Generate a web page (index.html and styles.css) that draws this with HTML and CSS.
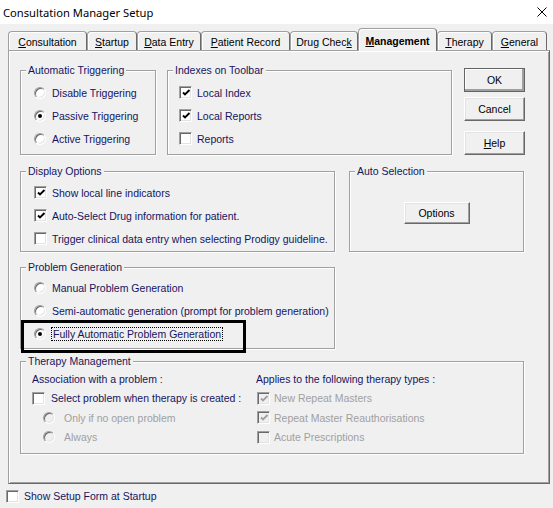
FILE: index.html
```html
<!DOCTYPE html>
<html>
<head>
    <meta charset="utf-8">
    <title>Consultation Manager Setup</title>
    <link rel="stylesheet" href="styles.css">
</head>
<body>
    <div class="titlebar">
        <span class="title">Consultation Manager Setup</span>
        <svg class="close" width="10" height="10" viewBox="0 0 10 10"><path d="M0.5 0.5L9.5 9.5M9.5 0.5L0.5 9.5" stroke="#000" stroke-width="1"/></svg>
    </div>

    <div class="tabs">
        <div class="tab w-cons"><u>C</u>onsultation</div>
        <div class="tab w-start"><u>S</u>tartup</div>
        <div class="tab w-data"><u>D</u>ata Entry</div>
        <div class="tab w-pat"><u>P</u>atient Record</div>
        <div class="tab w-drug">Drug Chec<u>k</u></div>
        <div class="tab w-man active"><u>M</u>anagement</div>
        <div class="tab w-ther"><u>T</u>herapy</div>
        <div class="tab w-gen"><u>G</u>eneral</div>
    </div>

    <div class="panel">
        <div class="row row-top">
            <fieldset class="group g-trig">
                <legend>Automatic Triggering</legend>
                <div class="opt"><span class="radio"></span>Disable Triggering</div>
                <div class="opt"><span class="radio on"></span>Passive Triggering</div>
                <div class="opt"><span class="radio"></span>Active Triggering</div>
            </fieldset>
            <fieldset class="group g-index">
                <legend>Indexes on Toolbar</legend>
                <div class="opt"><span class="check"><svg viewBox="0 0 9 9"><path d="M1 3.5L3 5.5L7.5 1" /></svg></span>Local Index</div>
                <div class="opt"><span class="check"><svg viewBox="0 0 9 9"><path d="M1 3.5L3 5.5L7.5 1" /></svg></span>Local Reports</div>
                <div class="opt"><span class="check"></span>Reports</div>
            </fieldset>
            <div class="buttons">
                <div class="btn default">OK</div>
                <div class="btn b-cancel">Cancel</div>
                <div class="btn b-help"><u>H</u>elp</div>
            </div>
        </div>

        <div class="row row-mid">
            <fieldset class="group g-display">
                <legend>Display Options</legend>
                <div class="opt"><span class="check"><svg viewBox="0 0 9 9"><path d="M1 3.5L3 5.5L7.5 1" /></svg></span>Show local line indicators</div>
                <div class="opt"><span class="check"><svg viewBox="0 0 9 9"><path d="M1 3.5L3 5.5L7.5 1" /></svg></span>Auto-Select Drug information for patient.</div>
                <div class="opt"><span class="check"></span>Trigger clinical data entry when selecting Prodigy guideline.</div>
            </fieldset>
            <fieldset class="group g-autosel">
                <legend>Auto Selection</legend>
                <div class="btn b-options">Options</div>
            </fieldset>
        </div>

        <fieldset class="group g-problem">
            <legend>Problem Generation</legend>
            <div class="opt"><span class="radio"></span>Manual Problem Generation</div>
            <div class="opt"><span class="radio"></span>Semi-automatic generation (prompt for problem generation)</div>
            <div class="opt marked"><span class="radio on"></span><span class="focus">Fully Automatic Problem Generation</span><span class="mark"></span></div>
        </fieldset>

        <fieldset class="group g-therapy">
            <legend>Therapy Management</legend>
            <div class="cols">
                <div class="col col-left">
                    <div class="line">Association with a problem :</div>
                    <div class="line"><span class="check"></span>Select problem when therapy is created :</div>
                    <div class="line sub off"><span class="radio"></span>Only if no open problem</div>
                    <div class="line sub off"><span class="radio"></span>Always</div>
                </div>
                <div class="col col-right">
                    <div class="line">Applies to the following therapy types :</div>
                    <div class="line off"><span class="check"><svg viewBox="0 0 9 9"><path d="M1 3.5L3 5.5L7.5 1" /></svg></span>New Repeat Masters</div>
                    <div class="line off"><span class="check"><svg viewBox="0 0 9 9"><path d="M1 3.5L3 5.5L7.5 1" /></svg></span>Repeat Master Reauthorisations</div>
                    <div class="line off"><span class="check"></span>Acute Prescriptions</div>
                </div>
            </div>
        </fieldset>
    </div>

    <div class="startup"><span class="check"></span>Show Setup Form at Startup</div>
</body>
</html>
```

FILE: styles.css
```css
* {box-sizing: border-box;}
body {
    margin: 0;
    width: 553px;
    height: 508px;
    overflow: hidden;
    background: #f0f0f0;
    color: #15155e;
    font: 10.5px "Liberation Sans", Arial, sans-serif;}

/* window title */
.titlebar {
    height: 24px;
    background: #fff;
    display: flex;
    align-items: center;
    justify-content: space-between;
    padding: 0 6px 0 3px;}
.title {font: 11.2px "Noto Sans", sans-serif; color: #000;}
.close {margin-top: -1px;}

/* tab strip */
.tabs {
    display: flex;
    align-items: flex-end;
    height: 26px;
    padding-left: 8px;
    position: relative;
    z-index: 1;}
.tab {
    height: 19px;
    border: 1px solid #a0a0a0;
    border-right-color: #696969;
    border-bottom: none;
    border-radius: 4px 4px 0 0;
    box-shadow: inset 1px 1px #fff;
    color: #000;
    display: flex;
    align-items: center;
    justify-content: center;
    padding-top: 1px;}
.tab.active {height: 23px; margin-bottom: -1px; background: #f0f0f0; font-weight: bold;}
.w-cons {width: 79px;}
.w-start {width: 50px;}
.w-data {width: 64px;}
.w-pat {width: 89px;}
.w-drug {width: 68px;}
.w-man {width: 79px;}
.w-ther {width: 55px;}
.w-gen {width: 55px;}

/* page of the tab */
.panel {
    margin-left: 8px;
    width: 542px;
    height: 434px;
    border: 1px solid;
    border-color: #a0a0a0 #696969 #696969 #a0a0a0;
    box-shadow: inset 1px 1px #fff, inset -1px -1px #a0a0a0;
    padding: 13px 0 0 11px;}
.row {display: flex; align-items: flex-start;}

.group {
    margin: 0;
    padding: 0;
    min-width: 0;
    border: 1px solid #a0a0a0;
    box-shadow: 1px 1px #fff, inset 1px 1px #fff;}
.group legend {
    margin-left: 5px;
    padding: 0 2px;
    height: 13px;
    line-height: 13px;
    background: #f0f0f0;}

.opt {display: flex; align-items: center; height: 23px; white-space: nowrap;}

.g-trig {width: 136px; height: 91px; padding-top: 4px;}
.g-trig .opt {padding-left: 13px; gap: 6px;}
.g-index {width: 285px; height: 91px; margin-left: 11px; padding-top: 4px;}
.g-index .opt {padding-left: 11px; gap: 5px;}

.buttons {display: flex; flex-direction: column; margin: 4px 0 0 12px;}
.btn {
    width: 61px;
    height: 24px;
    display: flex;
    align-items: center;
    justify-content: center;
    color: #000;
    border: 1px solid;
    border-color: #fff #696969 #696969 #fff;
    box-shadow: inset -1px -1px #a0a0a0, inset 1px 1px #e3e3e3;}
.btn.default {border-color: #646464; box-shadow: inset -2px -2px #a0a0a0, inset 1px 1px #fff;}
.b-cancel {margin-top: 5px;}
.b-help {margin-top: 10px;}

.row-mid {margin-top: 10px;}
.g-display {width: 315px; height: 87px; padding-top: 3px;}
.g-display .opt {padding-left: 13px; gap: 5px;}
.g-autosel {width: 175px; height: 87px; margin-left: 14px; padding-top: 24px;}
.b-options {width: 66px; height: 22px; margin: 0 auto;}

.g-problem {width: 315px; height: 88px; margin-top: 9px; padding-top: 2px;}
.g-problem .opt {padding-left: 13px; gap: 6px;}
.marked {position: relative;}
.focus {outline: 1px dotted #000; outline-offset: 0; padding: 0 1px;}
.mark {
    position: absolute;
    left: 0;
    top: -2px;
    width: 225px;
    height: 33px;
    border: 3px solid #000;
    pointer-events: none;}

.g-therapy {width: 504px; height: 99px; margin-top: 6px; padding-top: 1px;}
.cols {display: grid; grid-template-columns: 235px 1fr;}
.col-left {padding-left: 11px;}
.line {display: flex; align-items: center; height: 19.5px; gap: 6px; white-space: nowrap;}
.sub {padding-left: 11px; gap: 9px;}
.col-right .line {gap: 4px;}
.col-right .line .check {margin-left: 1px;}
.off {color: #a0a0a0;}

/* hand drawn controls */
.radio, .check {
    flex: none;
    position: relative;
    background: #fff;
    border: 1px solid;
    border-color: #a0a0a0 #fff #fff #a0a0a0;
    box-shadow: inset 1px 1px #696969, inset -1px -1px #e3e3e3;}
.radio {width: 12px; height: 12px; border-radius: 50%;}
.radio.on::after {
    content: "";
    position: absolute;
    left: 3px;
    top: 3px;
    width: 4px;
    height: 4px;
    border-radius: 50%;
    background: #000;}
.check {width: 13px; height: 13px; padding: 2px;}
.check svg {display: block; width: 9px; height: 9px;}
.check path {fill: none; stroke: #000; stroke-width: 1.9;}
.off .radio, .off .check {background: #f0f0f0;}
.off .check path {stroke: #a0a0a0;}

.startup {display: flex; align-items: center; height: 24px; padding-left: 6px; gap: 5px;}
```
